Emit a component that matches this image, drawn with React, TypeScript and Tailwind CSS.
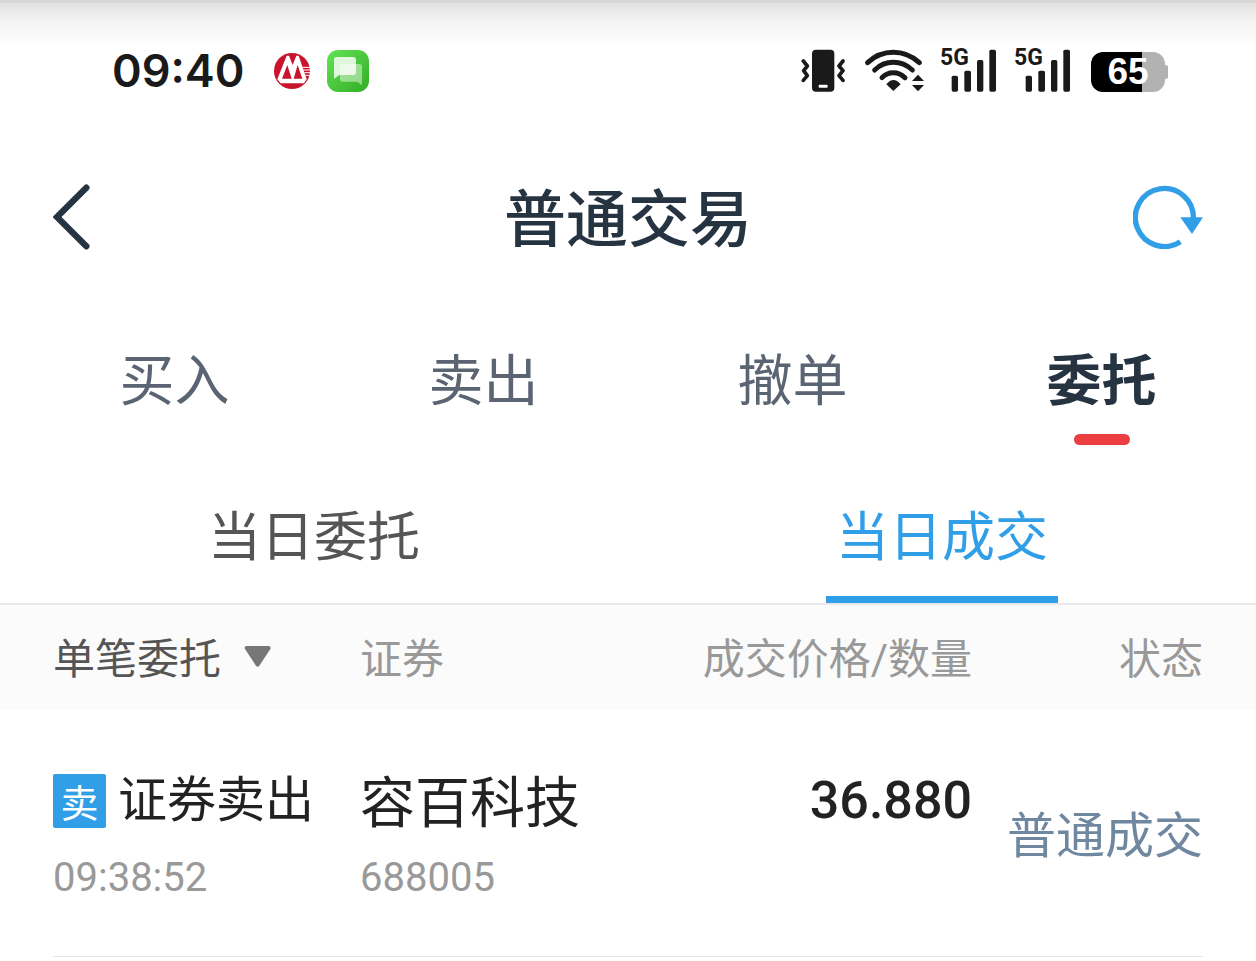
import React, { useState } from 'react';

interface Trade {
  id: string;
  side: string;
  action: string;
  time: string;
  name: string;
  code: string;
  price: string;
  status: string;
}

const tabs = ['买入', '卖出', '撤单', '委托'];
const subTabs = ['当日委托', '当日成交'];

const trades: Trade[] = [
  {
    id: '1',
    side: '卖',
    action: '证券卖出',
    time: '09:38:52',
    name: '容百科技',
    code: '688005',
    price: '36.880',
    status: '普通成交',
  },
];

const BankIcon = () => (
  <svg className="w-9 h-9" viewBox="0 0 108 108" aria-hidden="true">
    <circle cx="54" cy="54" r="54" fill="#c8152d" />
    <path d="M10 79 L38 8 H45 L56 36 L67 8 H74 L98 79 L90 91 H20 Z" fill="#fff" />
    <path d="M40 36 L53 77 H24 Z" fill="#c8152d" />
    <path d="M71 36 L85 77 H59 Z" fill="#c8152d" />
    <path d="M86 43 H108 M88 51 H108 M91 59 H108 M94 67 H108" stroke="#fff" strokeWidth="3" />
  </svg>
);

const MessageIcon = () => (
  <svg className="w-[42px] h-[42px]" viewBox="0 0 126 126" aria-hidden="true">
    <defs>
      <linearGradient id="msg-bg" x1="0" y1="0" x2="1" y2="1">
        <stop offset="0" stopColor="#62e356" />
        <stop offset="1" stopColor="#33ad24" />
      </linearGradient>
    </defs>
    <rect width="126" height="126" rx="34" fill="url(#msg-bg)" />
    <path d="M47 42 H97 Q105 42 105 50 V106 L90 95 H47 Q39 95 39 87 V50 Q39 42 47 42 Z" fill="#fff" opacity="0.45" />
    <path d="M29 21 H79 Q87 21 87 29 V67 Q87 75 79 75 H37 L21 86 V29 Q21 21 29 21 Z" fill="#fff" opacity="0.82" />
  </svg>
);

const VibrateIcon = () => (
  <svg className="w-[45px] h-11" viewBox="34 55 135 132" aria-hidden="true">
    <rect x="67" y="60" width="67" height="126" rx="12" fill="#1a1a1a" />
    <rect x="87" y="165" width="27" height="9" rx="3" fill="#fff" />
    <path
      d="M41 94 L53 109 L42 123 L53 138 L41 152 M160 94 L148 109 L160 123 L148 138 L160 152"
      fill="none"
      stroke="#1a1a1a"
      strokeWidth="11"
      strokeLinecap="round"
      strokeLinejoin="round"
    />
  </svg>
);

const WifiIcon = () => (
  <svg className="w-[60px] h-11" viewBox="225 55 180 132" aria-hidden="true">
    <g fill="none" stroke="#1a1a1a" strokeWidth="15" strokeLinecap="round">
      <path d="M233 99 Q266 68 310 68 Q354 68 388 99" />
      <path d="M254 121 Q278 98 310 98 Q342 98 367 121" />
      <path d="M276 144 Q290 129 310 129 Q330 129 345 144" />
    </g>
    <path d="M289 164 Q310 138 332 164 L310 184 Z" fill="#1a1a1a" />
    <path d="M384 135 L402 154 H366 Z M384 185 L402 166 H366 Z" fill="#1a1a1a" />
  </svg>
);

const Signal = () => (
  <div className="relative">
    <svg className="w-14 h-11" viewBox="450 55 168 132" fill="#1a1a1a" aria-hidden="true">
      <rect x="485" y="138" width="19" height="48" rx="5" />
      <rect x="523" y="123" width="20" height="63" rx="5" />
      <rect x="561" y="91" width="19" height="95" rx="5" />
      <rect x="598" y="60" width="20" height="126" rx="5" />
    </svg>
    <span className="absolute left-0 top-0 text-[23px] leading-5 font-bold text-[#1a1a1a]">5G</span>
  </div>
);

const Battery = ({ level }: { level: number }) => (
  <div className="flex items-center">
    <div
      className="w-[74px] h-10 rounded-xl flex items-center justify-center text-white text-[37px] leading-10 font-bold font-['Liberation_Sans',sans-serif]"
      style={{ background: `linear-gradient(to right, #000 ${level + 4}%, #b2b2b2 ${level + 4}%)` }}
    >
      {level}
    </div>
    <div className="w-[3px] h-3.5 rounded-r-xs bg-[#b2b2b2]" />
  </div>
);

const StatusBar = () => (
  <div className="h-[140px] border-t-[3px] border-[#d6d6d6] bg-[linear-gradient(#e0e0e0,#f4f4f4_18px,#fff_44px)]">
    <div className="h-[134px] pl-28 pr-[88px] flex items-center justify-between">
      <div className="flex items-center pt-0.5">
        <span className="text-[45px] leading-[56px] font-semibold text-[#1a1a1a] font-[Inter,sans-serif]">09:40</span>
        <div className="ml-[30px] flex items-center gap-[17px]">
          <BankIcon />
          <MessageIcon />
        </div>
      </div>
      <div className="flex items-end">
        <VibrateIcon />
        <div className="ml-[19px]">
          <WifiIcon />
        </div>
        <div className="ml-[15px] mr-[21px] flex gap-[18px]">
          <Signal />
          <Signal />
        </div>
        <Battery level={65} />
      </div>
    </div>
  </div>
);

const App: React.FC = () => {
  const [activeTab, setActiveTab] = useState('委托');
  const [activeSubTab, setActiveSubTab] = useState('当日成交');

  return (
    <div className="min-h-screen bg-white font-[Roboto,'Noto_Sans_CJK_SC',sans-serif]" lang="zh-CN">
      <StatusBar />

      <header className="h-[154px] px-[53px] grid grid-cols-[1fr_auto_1fr] items-center">
        <button className="justify-self-start" aria-label="返回">
          <svg className="w-[38px] h-[66px]" viewBox="68 44 114 198" aria-hidden="true">
            <path d="M168 55 L80 143 L168 231" fill="none" stroke="#263442" strokeWidth="19" strokeLinecap="round" />
          </svg>
        </button>
        <h1 className="pt-2 text-[62px] leading-[80px] font-medium text-[#263442]">普通交易</h1>
        <button className="justify-self-end" aria-label="刷新">
          <svg className="w-[70px] h-16" viewBox="69 44 210 192" aria-hidden="true">
            <path d="M250 145 A87 87 0 1 0 211 214" fill="none" stroke="#319fe7" strokeWidth="16" />
            <path d="M211 141 H279 L246 191 Z" fill="#319fe7" />
          </svg>
        </button>
      </header>

      <nav className="pl-5 pt-[47px] grid grid-cols-4">
        {tabs.map((tab) => {
          const isActive = activeTab === tab;
          return (
            <button
              key={tab}
              onClick={() => setActiveTab(tab)}
              className={`flex flex-col items-center gap-[13px] text-[55px] leading-[80px] ${
                isActive ? 'font-bold text-[#263442]' : 'text-[#5b6472]'
              }`}
            >
              {tab}
              <span className={`w-14 h-[11px] rounded-full ${isActive ? 'bg-[#ec3e40]' : ''}`} />
            </button>
          );
        })}
      </nav>

      <nav className="pt-[53px] grid grid-cols-2 border-b-2 border-[#e8e8e8]">
        {subTabs.map((tab) => {
          const isActive = activeSubTab === tab;
          return (
            <button
              key={tab}
              onClick={() => setActiveSubTab(tab)}
              className={`flex flex-col items-center gap-[18px] text-[53px] leading-[80px] ${
                isActive ? 'text-[#319fe7]' : 'text-[#555]'
              }`}
            >
              {tab}
              <span className={`w-[232px] h-[7px] ${isActive ? 'bg-[#319fe7]' : ''}`} />
            </button>
          );
        })}
      </nav>

      <table className="w-full table-fixed text-left">
        <colgroup>
          <col className="w-[360px]" />
          <col />
          <col />
          <col className="w-[284px]" />
        </colgroup>
        <thead className="bg-[#fbfbfb] text-[42px] leading-[60px] text-[#999]">
          <tr className="h-[105px]">
            <th className="p-0 pt-1 pl-[53px] font-normal">
              <div className="relative inline-flex items-center align-top">
                <select aria-label="委托类型" className="appearance-none bg-transparent pr-[50px] text-[#555] outline-none">
                  <option>单笔委托</option>
                </select>
                <svg className="absolute right-0 top-4 w-7 h-[21px] pointer-events-none" viewBox="0 0 84 63" aria-hidden="true">
                  <path d="M8 6 H74 L41 56 Z" fill="#777" stroke="#777" strokeWidth="12" strokeLinejoin="round" />
                </svg>
              </div>
            </th>
            <th className="p-0 pt-1 font-normal">证券</th>
            <th className="p-0 pt-1 font-normal text-right">成交价格/数量</th>
            <th className="p-0 pt-1 pr-[53px] font-normal text-right">状态</th>
          </tr>
        </thead>
        <tbody>
          {trades.map((trade) => (
            <tr key={trade.id} className="align-top text-[#222]">
              <td className="p-0 pl-[53px] pt-[61px] pb-[58px]">
                <div className="flex items-center gap-3 text-[49px] leading-[60px] whitespace-nowrap">
                  <span className="w-[53px] h-[54px] rounded-xs bg-[#319fe7] text-white text-[38px] text-center">
                    {trade.side}
                  </span>
                  {trade.action}
                </div>
                <div className="mt-[27px] text-[40px] leading-10 text-[#999]">{trade.time}</div>
              </td>
              <td className="p-0 pt-[61px]">
                <div className="text-[55px] leading-[64px] whitespace-nowrap">{trade.name}</div>
                <div className="mt-[23px] text-[40px] leading-10 text-[#999]">{trade.code}</div>
              </td>
              <td className="p-0 pt-[61px] text-right text-[52px] leading-[60px] font-medium">{trade.price}</td>
              <td className="p-0 pt-2 pr-[53px] align-middle text-right text-[49px] leading-[64px] text-[#6f88a0]">
                {trade.status}
              </td>
            </tr>
          ))}
        </tbody>
      </table>
      <hr className="mx-[53px] border-[#e6e6e6]" />
    </div>
  );
};

export default App;
